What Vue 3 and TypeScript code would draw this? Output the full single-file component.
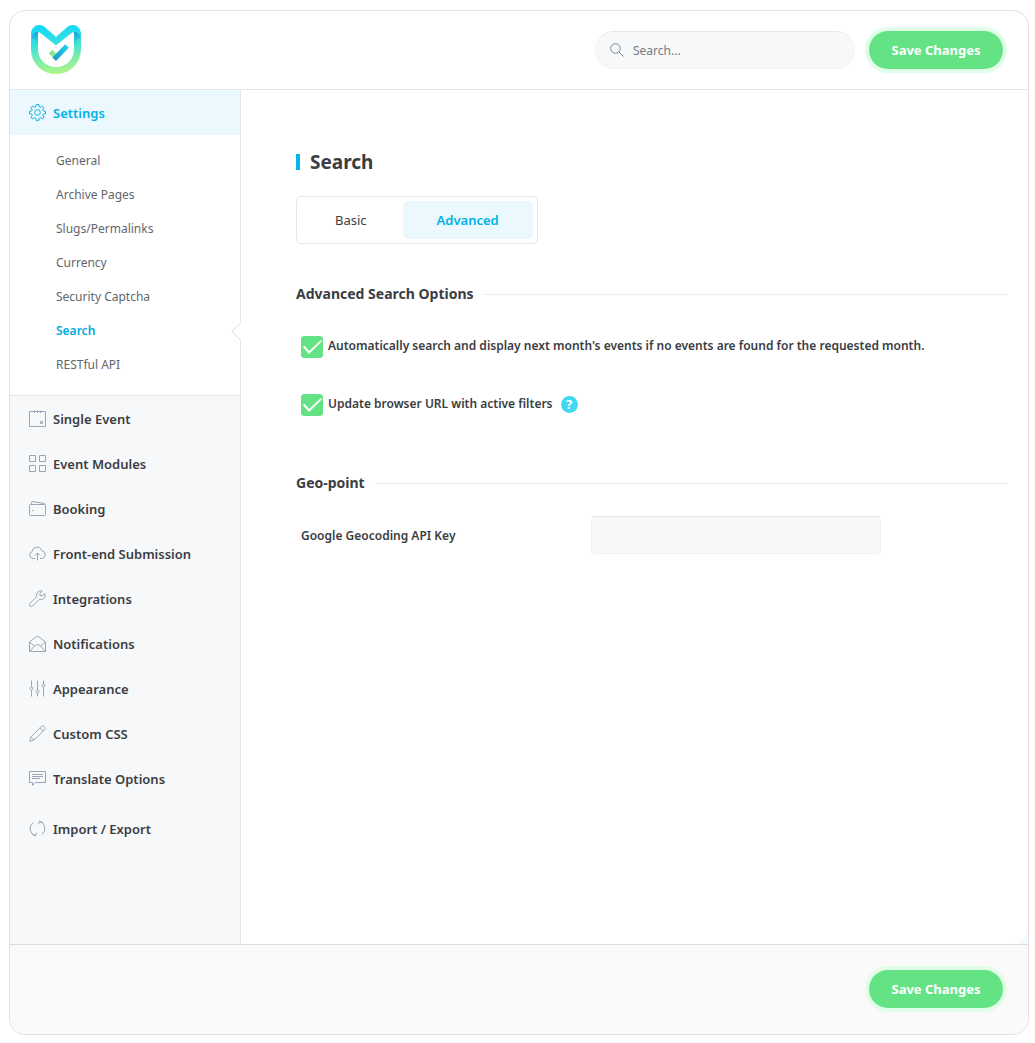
<script setup lang="ts">
import { ref } from 'vue'

interface MenuItem {
  label: string
  paths: string[]
  spaced?: boolean
}

const subItems: string[] = [
  'General',
  'Archive Pages',
  'Slugs/Permalinks',
  'Currency',
  'Security Captcha',
  'Search',
  'RESTful API',
]
const activeSub = ref('Search')

const menu: MenuItem[] = [
  {
    label: 'Single Event',
    paths: ['M.5 1.5H16.5V16.5H.5Z', 'M5.5 .5V3M8.5 .5V3M11.5 .5V3', 'M11.5 11.5H13.5V13.5H11.5Z'],
  },
  {
    label: 'Event Modules',
    paths: ['M.5 .5H6.5V6.5H.5Z', 'M10.5 .5H16.5V6.5H10.5Z', 'M.5 10.5H6.5V16.5H.5Z', 'M10.5 10.5H16.5V16.5H10.5Z'],
  },
  {
    label: 'Booking',
    paths: ['M1.5 4.5H15.5Q16.5 4.5 16.5 5.500V14.5Q16.5 15.5 15.5 15.5H1.5Q.5 15.5 .5 14.5V5.5Q.5 4.5 1.5 4.5Z', 'M2 4.5L3 1.5L15.500 3.500V4.5', 'M3 10.5H4.5'],
  },
  {
    label: 'Front-end Submission',
    paths: ['M6 13.5H4A3.5 3.5 0 0 1 3 6.7A5 5 0 0 1 12.7 5.6A4 4 0 0 1 13 13.5H11', 'M8.5 15.5V8M6 10.5L8.5 8L11 10.5'],
  },
  {
    label: 'Integrations',
    paths: ['M15.8 3.4L13.3 5.9L11 5.5L10.8 3.4L13.3 1A4.4 4.4 0 0 0 7.7 6.6L1 13.3A1.8 1.8 0 0 0 3.7 16L10.2 9.4A4.4 4.4 0 0 0 15.8 3.4Z'],
  },
  {
    label: 'Notifications',
    paths: ['M.5 7L8.5 .8L16.5 7V16.5H.5Z', 'M.5 7L5.5 11L8.5 9.3L11.5 11L16.5 7', 'M.8 16.2L5.5 11M11.5 11L16.2 16.2'],
  },
  {
    label: 'Appearance',
    paths: ['M2.5 .5V7M2.5 10V16.5M8.5 .5V10M8.5 13V16.5M14.5 .5V4M14.5 7V16.5', 'M1 8.5A1.5 1.5 0 1 0 4 8.5A1.5 1.5 0 1 0 1 8.5Z', 'M7 11.5A1.5 1.5 0 1 0 10 11.5A1.5 1.5 0 1 0 7 11.5Z', 'M13 5.5A1.5 1.5 0 1 0 16 5.5A1.5 1.5 0 1 0 13 5.5Z'],
  },
  {
    label: 'Custom CSS',
    paths: ['M.7 16.3L2 11.8L12.3 1.5Q13.5 .3 15 1.5L15.6 2.1Q16.7 3.4 15.5 4.7L5.2 15Z', 'M2 11.8L5.2 15M11 2.8L14.2 6'],
  },
  {
    label: 'Translate Options',
    paths: ['M.5 1.5H16.5V12.5H6.5L3.5 15.3V12.5H.5Z', 'M3 4.5H14M3 6.5H14M3 8.5H11'],
  },
  {
    label: 'Import / Export',
    spaced: true,
    paths: ['M6.2 15.6A7.3 7.3 0 0 1 4.2 2.6', 'M10.8 1.4A7.3 7.3 0 0 1 12.8 14.4', 'M3.4 14.6L6.6 15.8L7.4 12.6', 'M13.6 2.4L10.4 1.2L9.6 4.4'],
  },
]

const tabs: string[] = ['Basic', 'Advanced']
const activeTab = ref('Advanced')
const query = ref('')
const autoNextMonth = ref(true)
const updateUrl = ref(true)
const apiKey = ref('')
</script>

<template>
  <div class="page">
    <div class="card">
      <header class="topbar">
        <svg class="logo" viewBox="0 0 50 50" fill="none" aria-hidden="true">
          <defs>
            <linearGradient id="ring" gradientUnits="userSpaceOnUse" x1="22" y1="0" x2="28" y2="49">
              <stop offset="0" stop-color="#12d8fb" />
              <stop offset=".35" stop-color="#35dfe0" />
              <stop offset=".7" stop-color="#7fecaa" />
              <stop offset="1" stop-color="#b2f58a" />
            </linearGradient>
            <linearGradient id="fold" x1="0" y1="0" x2="0" y2="1">
              <stop offset="0" stop-color="#1aa5dc" />
              <stop offset=".4" stop-color="#25b9dc" />
              <stop offset="1" stop-color="#48e0d2" />
            </linearGradient>
            <linearGradient id="tick" gradientUnits="userSpaceOnUse" x1="24" y1="33" x2="37" y2="20">
              <stop offset="0" stop-color="#1d9fcb" />
              <stop offset="1" stop-color="#25d3f5" />
            </linearGradient>
          </defs>
          <path d="M3.500 12V24C3.500 36.500 13 45.500 25 45.500S46.500 36.500 46.500 24V12" stroke="url(#ring)" stroke-width="7" />
          <path d="M0 13C1 8 4 5 9 6L7 8V22C6 16 3 13 0 13Z M50 13C49 8 46 5 41 6L43 8V22C44 16 47 13 50 13Z" fill="url(#fold)" />
          <path d="M0 14V9C0 1 8.500 -2.500 14 2.200L25 12L36 2.200C41.500 -2.500 50 1 50 9V14C48.500 8 44 5 40.500 8L25 20.500L9.500 8C6 5 1.500 8 0 14Z" fill="url(#ring)" />
          <path d="M19.500 26.500L26.500 33.500" stroke="#8de68c" stroke-width="5" />
          <path d="M23.200 34.300L36 21" stroke="url(#tick)" stroke-width="5" />
        </svg>
        <label class="search">
          <svg viewBox="0 0 14 14" fill="none" stroke="#7d8793" aria-hidden="true">
            <circle cx="5.500" cy="5.500" r="4.800" />
            <path d="M9 9L13.500 13.500" />
          </svg>
          <input v-model="query" type="text" placeholder="Search..." aria-label="Search settings" />
        </label>
        <button type="button" class="save">Save Changes</button>
      </header>

      <div class="body">
        <nav class="sidebar">
          <a href="#settings" class="item current">
            <svg viewBox="0 0 17 17" fill="none" stroke="currentColor" aria-hidden="true">
              <path d="M7.200 .6H9.800L10.200 2.700L11.700 3.300L13.500 2.100L15 3.700L13.800 5.400L14.400 6.900L16.500 7.300V9.700L14.400 10.100L13.800 11.600L15 13.300L13.400 14.900L11.700 13.700L10.200 14.300L9.800 16.400H7.200L6.800 14.300L5.300 13.700L3.600 14.900L2 13.300L3.200 11.600L2.600 10.100L.5 9.700V7.300L2.600 6.900L3.200 5.400L2 3.700L3.600 2.100L5.300 3.300L6.800 2.700Z" stroke-linejoin="round" />
              <circle cx="8.500" cy="8.500" r="2.800" />
            </svg>
            Settings
          </a>
          <ul class="sub">
            <li v-for="name in subItems" :key="name" :class="{ active: name === activeSub }">
              <a href="#settings" @click.prevent="activeSub = name">{{ name }}</a>
            </li>
          </ul>
          <div class="rest">
            <a v-for="entry in menu" :key="entry.label" href="#section" class="item" :class="{ spaced: entry.spaced }">
              <svg viewBox="0 0 17 17" fill="none" stroke="currentColor" aria-hidden="true">
                <path v-for="d in entry.paths" :key="d" :d="d" />
              </svg>
              {{ entry.label }}
            </a>
          </div>
        </nav>

        <main class="content">
          <h1>Search</h1>
          <div class="tabs" role="tablist">
            <button
              v-for="tab in tabs"
              :key="tab"
              type="button"
              role="tab"
              :aria-selected="tab === activeTab"
              :class="{ on: tab === activeTab }"
              @click="activeTab = tab"
            >
              {{ tab }}
            </button>
          </div>

          <h2>Advanced Search Options</h2>
          <div class="row">
            <label class="check">
              <input v-model="autoNextMonth" type="checkbox" />
              Automatically search and display next month's events if no events are found for the requested month.
            </label>
          </div>
          <div class="row">
            <label class="check">
              <input v-model="updateUrl" type="checkbox" />
              Update browser URL with active filters
            </label>
            <button type="button" class="help" aria-label="Help">?</button>
          </div>

          <h2 class="second">Geo-point</h2>
          <div class="field">
            <label for="api-key">Google Geocoding API Key</label>
            <input id="api-key" v-model="apiKey" type="text" />
          </div>
        </main>
      </div>

      <footer class="bottom">
        <button type="button" class="save">Save Changes</button>
      </footer>
    </div>
  </div>
</template>

<style>
body {
  margin: 0;
  background: #fff;
}
</style>

<style scoped>
.page {
  box-sizing: border-box;
  display: flex;
  min-height: 100vh;
  padding: 10px 6px 8px 9px;
  font-family: 'Noto Sans', 'Open Sans', sans-serif;
  font-size: 13px;
  color: #3a3d42;
}
.page * {
  box-sizing: border-box;
}
.card {
  display: flex;
  flex: 1;
  flex-direction: column;
  overflow: hidden;
  border: 1px solid #dfe0e2;
  border-radius: 16px;
}
.topbar {
  display: flex;
  align-items: center;
  height: 79px;
  padding: 0 25px 0 21px;
  border-bottom: 1px solid #e4e5e7;
}
.logo {
  width: 50px;
  height: 50px;
  margin-right: auto;
}
.search {
  display: flex;
  align-items: center;
  gap: 9px;
  width: 260px;
  height: 38px;
  margin-right: 14px;
  padding: 0 14px;
  border: 1px solid #f1f2f4;
  border-top-color: #e7e8ea;
  border-radius: 19px;
  background: #f7f8fa;
}
.search svg {
  flex: none;
  width: 14px;
  height: 14px;
}
.search input {
  flex: 1;
  min-width: 0;
  padding: 0;
  border: 0;
  outline: 0;
  background: none;
  font: inherit;
  font-size: 12px;
  color: #3a3d42;
}
.search input::placeholder {
  color: #757a80;
  opacity: 1;
}
.save {
  width: 134px;
  height: 38px;
  padding: 0;
  border: 0;
  border-radius: 19px;
  background: #64e385;
  box-shadow: 0 0 0 4px #e0fde7;
  color: #fff;
  font: inherit;
  font-weight: 700;
  cursor: pointer;
}
.body {
  display: flex;
  flex: 1;
  background: #f7f8fa;
}
.sidebar {
  flex: none;
  width: 231px;
  border-right: 1px solid #e4e5e7;
}
.item {
  display: flex;
  align-items: center;
  gap: 7px;
  height: 45px;
  padding-left: 19px;
  color: #3a3d42;
  font-weight: 600;
  text-decoration: none;
}
.item svg {
  flex: none;
  width: 17px;
  height: 17px;
}
.rest .item svg {
  color: #98a6b5;
}
.rest .spaced {
  margin-top: 5px;
}
.current {
  background: #ebf8fd;
  color: #00b2e5;
}
.sub {
  margin: 0;
  padding: 9px 0 13px;
  border-bottom: 1px solid #e4e5e7;
  background: #fff;
  list-style: none;
}
.sub li {
  position: relative;
  padding-left: 46px;
  line-height: 34px;
  font-size: 12px;
}
.sub a {
  color: #63676c;
  text-decoration: none;
}
.sub .active a {
  color: #00a9dc;
  font-weight: 600;
}
.active::after {
  content: '';
  position: absolute;
  top: 11px;
  right: -7px;
  width: 12px;
  height: 12px;
  border: solid #e4e5e7;
  border-width: 0 0 1px 1px;
  background: #fff;
  transform: rotate(45deg);
}
.content {
  flex: 1;
  min-width: 0;
  padding: 58px 20px 40px 55px;
  border-bottom-right-radius: 16px;
  background: #fff;
}
h1 {
  display: flex;
  align-items: center;
  gap: 10px;
  margin: 0 0 20px;
  font-size: 19px;
  line-height: 28px;
}
h1::before {
  content: '';
  width: 4px;
  height: 16px;
  background: #00b8ea;
}
.tabs {
  display: inline-flex;
  gap: 2px;
  height: 48px;
  padding: 4px;
  border: 1px solid #e4e5e7;
  border-radius: 5px;
}
.tabs button {
  padding: 0 34px;
  border: 0;
  border-radius: 5px;
  background: none;
  color: #3a3d42;
  font: inherit;
  cursor: pointer;
}
.tabs .on {
  background: #ebf8fd;
  color: #00b2e5;
  font-weight: 600;
}
h2 {
  display: flex;
  align-items: center;
  gap: 10px;
  margin: 38px 0 30px;
  font-size: 14px;
  line-height: 24px;
}
h2::after {
  content: '';
  flex: 1;
  height: 1px;
  background: #ebecee;
}
.row {
  display: flex;
  align-items: flex-start;
  gap: 8px;
  height: 20px;
  margin-bottom: 38px;
  padding-left: 5px;
}
.check {
  display: flex;
  align-items: flex-start;
  gap: 5px;
  font-size: 12px;
  font-weight: 600;
  line-height: 20px;
}
.check input {
  display: grid;
  flex: none;
  place-items: center;
  width: 22px;
  height: 22px;
  margin: 0;
  border: 1px solid #d5d8dc;
  border-radius: 3px;
  appearance: none;
}
.check input:checked {
  border-color: #64e385;
  background: #64e385;
}
.check input:checked::after {
  content: '';
  width: 20px;
  height: 14px;
  background: #fff;
  clip-path: polygon(5% 50%, 13% 41%, 35% 78%, 95% 0, 100% 9%, 35% 100%);
}
.help {
  align-self: center;
  width: 17px;
  height: 17px;
  padding: 0;
  border: 0;
  border-radius: 50%;
  background: #40d9f1;
  color: #fff;
  font: inherit;
  font-weight: 700;
  line-height: 17px;
}
.second {
  margin: 57px 0 21px;
}
.field {
  display: flex;
  align-items: center;
  padding-left: 5px;
}
.field label {
  width: 290px;
  font-size: 12px;
  font-weight: 600;
}
.field input {
  width: 290px;
  height: 38px;
  padding: 0 10px;
  border: 1px solid #f1f2f4;
  border-top-color: #e4e5e7;
  border-radius: 4px;
  background: #f7f8fa;
  font: inherit;
}
.bottom {
  display: flex;
  align-items: center;
  justify-content: flex-end;
  height: 90px;
  padding: 0 25px 2px 0;
  border-top: 1px solid #dcddde;
  background: #fafafa;
}
</style>
